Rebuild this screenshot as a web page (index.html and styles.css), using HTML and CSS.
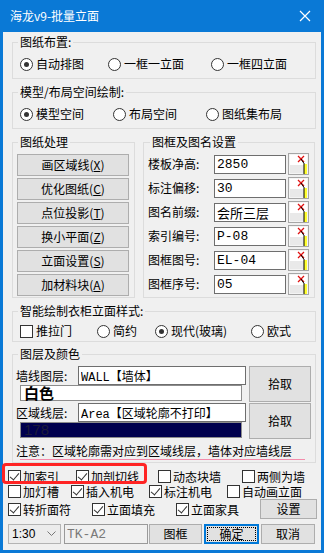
FILE: index.html
```html
<!DOCTYPE html>
<html lang="zh">
  <head>
    <meta charset="UTF-8" />
    <meta name="viewport" content="width=device-width, initial-scale=1.0" />
    <title>海龙v9-批量立面</title>
    <link rel="stylesheet" href="styles.css">
  </head>
  <body>
    <div class="window">
      <div class="titlebar">
        <span class="title">海龙v9-批量立面</span>
        <svg class="close" width="12" height="12" viewBox="0 0 12 12">
          <path d="M1 1 L11 11 M11 1 L1 11" stroke="#fff" stroke-width="1.2" fill="none" />
        </svg>
      </div>

      <div class="content">
        <fieldset class="group g-wide">
          <legend>图纸布置:</legend>
          <div class="opts cols-layout">
            <label class="opt"><span class="radio on"></span>自动排图</label>
            <label class="opt"><span class="radio"></span>一框一立面</label>
            <label class="opt"><span class="radio"></span>一框四立面</label>
          </div>
        </fieldset>

        <fieldset class="group g-wide">
          <legend>模型/布局空间绘制:</legend>
          <div class="opts cols-space">
            <label class="opt"><span class="radio on"></span>模型空间</label>
            <label class="opt"><span class="radio"></span>布局空间</label>
            <label class="opt"><span class="radio"></span>图纸集布局</label>
          </div>
        </fieldset>

        <div class="split">
          <fieldset class="group g-tools">
            <legend>图纸处理</legend>
            <div class="tools">
              <button class="btn">画区域线(<u>X</u>)</button>
              <button class="btn">优化图纸(<u>C</u>)</button>
              <button class="btn">点位投影(<u>T</u>)</button>
              <button class="btn">换小平面(<u>Z</u>)</button>
              <button class="btn">立面设置(<u>S</u>)</button>
              <button class="btn">加材料块(<u>A</u>)</button>
            </div>
          </fieldset>

          <fieldset class="group g-frame">
            <legend>图框及图名设置</legend>
            <div class="fields">
              <div class="field"><span class="flabel">楼板净高:</span><input class="txt" value="2850"><button class="pick"></button></div>
              <div class="field"><span class="flabel">标注偏移:</span><input class="txt" value="30"><button class="pick"></button></div>
              <div class="field"><span class="flabel">图名前缀:</span><input class="txt" value="会所三层"><button class="pick"></button></div>
              <div class="field"><span class="flabel">索引编号:</span><input class="txt" value="P-08"><button class="pick"></button></div>
              <div class="field"><span class="flabel">图框图号:</span><input class="txt" value="EL-04"><button class="pick"></button></div>
              <div class="field"><span class="flabel">图框序号:</span><input class="txt" value="05"><button class="pick"></button></div>
            </div>
          </fieldset>
        </div>

        <fieldset class="group g-wide g-style">
          <legend>智能绘制衣柜立面样式:</legend>
          <div class="opts cols-style">
            <label class="opt"><span class="chk"></span>推拉门</label>
            <label class="opt"><span class="radio"></span>简约</label>
            <label class="opt"><span class="radio on"></span>现代(玻璃)</label>
            <label class="opt"><span class="radio"></span>欧式</label>
          </div>
        </fieldset>

        <fieldset class="group g-wide g-layers">
          <legend>图层及颜色</legend>
          <div class="layer-row">
            <div class="layer-left">
              <div class="layer-top">
                <span class="llabel">墙线图层:</span>
                <input class="ltxt" value="WALL【墙体】">
              </div>
              <div class="swatch swatch-white">白色</div>
            </div>
            <button class="btn btn-pick">拾取</button>
          </div>
          <div class="layer-row">
            <div class="layer-left">
              <div class="layer-top">
                <span class="llabel">区域线层:</span>
                <input class="ltxt" value="Area【区域轮廓不打印】">
              </div>
              <div class="swatch swatch-navy">178</div>
            </div>
            <button class="btn btn-pick">拾取</button>
          </div>
          <div class="note">注意：区域轮廓需对应到区域线层，墙体对应墙线层</div>
          <div class="note-rule"></div>
        </fieldset>

        <div class="checks">
          <div class="crow cols-c1">
            <label class="opt"><span class="chk on"></span>加索引</label>
            <label class="opt"><span class="chk on"></span>加剖切线</label>
            <label class="opt"><span class="chk"></span>动态块墙</label>
            <label class="opt"><span class="chk"></span>两侧为墙</label>
          </div>
          <div class="crow cols-c2">
            <label class="opt"><span class="chk"></span>加灯槽</label>
            <label class="opt"><span class="chk on"></span>插入机电</label>
            <label class="opt"><span class="chk on"></span>标注机电</label>
            <label class="opt"><span class="chk"></span>自动画立面</label>
          </div>
          <div class="crow cols-c3">
            <label class="opt"><span class="chk on"></span>转折面符</label>
            <label class="opt"><span class="chk on"></span>立面填充</label>
            <label class="opt"><span class="chk on"></span>立面家具</label>
            <button class="btn btn-set">设置</button>
          </div>
          <div class="mark"></div>
        </div>

        <div class="footer">
          <div class="combo">
            <span>1:30</span>
            <svg width="9" height="6" viewBox="0 0 9 6"><path d="M0.5 0.5 L4.5 4.5 L8.5 0.5" stroke="#777" fill="none" /></svg>
          </div>
          <input class="tk" value="TK-A2" readonly>
          <button class="btn btn-foot btn-frame">图框</button>
          <button class="btn btn-foot btn-ok"><span class="focus">确定</span></button>
          <button class="btn btn-foot btn-cancel">取消</button>
        </div>
      </div>
    </div>
  </body>
</html>
```

FILE: styles.css
```css
* {
  box-sizing: border-box;
  margin: 0;
  padding: 0;
}

body {
  font-family: "Noto Sans CJK SC", "Noto Sans", sans-serif;
  font-size: 12px;
  line-height: 16px;
  color: #000;
  background-color: #fff;
}

.window {
  width: 324px;
  height: 553px;
  border: 3px solid #0a79d6;
  border-top: none;
  background-color: #f0f0f0;
}

/* Title bar */
.titlebar {
  height: 32px;
  margin: 0 -3px;
  padding: 0 13px 0 10px;
  background-color: #0a79d6;
  color: #fff;
  display: flex;
  align-items: center;
  justify-content: space-between;
}

.title {
  font-size: 12px;
  line-height: 16px;
}

.content {
  padding-top: 2px;
}

/* Group boxes */
.group {
  border: 1px solid #dcdcdc;
  min-width: 0;
  padding: 0 4px 6px 7px;
}

.group legend {
  padding: 0 2px;
  margin-left: -2px;
  line-height: 16px;
}

.g-wide {
  margin: 0 5px 5px 9px;
}

.g-style {
  padding-bottom: 2px;
  margin-bottom: 4px;
}

.opts {
  display: grid;
  margin-top: 6px;
  align-items: center;
}

.g-style .opts {
  margin-top: 4px;
}

.cols-layout {
  grid-template-columns: 88px 103px auto;
}

.cols-space {
  grid-template-columns: 93px 93px auto;
}

.cols-style {
  grid-template-columns: 77px 58px 96px auto;
}

.opt {
  display: flex;
  align-items: center;
  gap: 3px;
  white-space: nowrap;
  height: 16px;
}

.radio {
  position: relative;
  display: inline-block;
  width: 13px;
  height: 13px;
  border: 1px solid #333;
  border-radius: 50%;
  background-color: #fff;
  flex: none;
}

.radio.on::after {
  content: "";
  position: absolute;
  left: 3px;
  top: 3px;
  width: 5px;
  height: 5px;
  border-radius: 50%;
  background-color: #333;
}

.chk {
  position: relative;
  display: inline-block;
  width: 13px;
  height: 13px;
  border: 1px solid #333;
  background-color: #fff;
  flex: none;
}

.chk.on::after {
  content: "";
  position: absolute;
  left: 3px;
  top: 0px;
  width: 4px;
  height: 8px;
  border-right: 1.5px solid #333;
  border-bottom: 1.5px solid #333;
  transform: rotate(40deg);
}

/* Buttons */
.btn {
  font-family: "Noto Sans CJK SC", sans-serif;
  font-size: 12px;
  line-height: 16px;
  color: #000;
  background-color: #e1e1e1;
  border: 1px solid #adadad;
  cursor: pointer;
}

.btn u {
  text-underline-offset: 1px;
}

/* Drawing tools and frame settings */
.split {
  display: flex;
  margin: 0 6px 5px 9px;
  gap: 8px;
}

.g-tools {
  width: 123px;
  padding: 0 5px 1px 4px;
}

.g-tools legend {
  margin-left: 1px;
}

.tools {
  display: flex;
  flex-direction: column;
  gap: 2px;
  margin-top: 4px;
}

.tools .btn {
  height: 22px;
  width: 112px;
}

.g-frame {
  flex: 1;
  padding: 0 4px 1px 4px;
}

.g-frame legend {
  margin-left: 2px;
}

.fields {
  display: flex;
  flex-direction: column;
  gap: 2px;
  margin-top: 3px;
}

.field {
  display: flex;
  align-items: center;
  height: 22px;
}

.flabel {
  width: 66px;
  flex: none;
}

.txt {
  width: 72px;
  height: 19px;
  border: 1px solid #6e6e6e;
  padding: 0 2px;
  background-color: #fff;
  font-family: "Liberation Mono", "Noto Sans CJK SC", monospace;
  font-size: 13px;
  color: #000;
  outline: none;
}

.pick {
  width: 21px;
  height: 22px;
  margin-left: 2px;
  border: 1px solid #a6a6a6;
  background-color: #f4f4f4;
  background-image:
    url("data:image/svg+xml;utf8,<svg xmlns='http://www.w3.org/2000/svg' width='19' height='20' viewBox='0 0 19 20'><rect x='1' y='1' width='17' height='10' fill='%23ffffff'/><rect x='1' y='11' width='17' height='8' fill='%23e9e9e9'/><path d='M9 2 L15 8 M15 2 L9 8' stroke='%23e01010' stroke-width='1.3'/><path d='M12 5 L16 11' stroke='%23000' stroke-width='1'/><rect x='15' y='10' width='3' height='10' fill='%23ffff30'/><path d='M15 10 L15 20' stroke='%23000' stroke-width='1'/></svg>");
  background-repeat: no-repeat;
  background-position: center;
}

/* Layers */
.g-layers {
  padding: 0 4px 2px 3px;
  margin-bottom: 6px;
}

.g-layers legend {
  margin-left: 2px;
}

.layer-row {
  display: flex;
  margin-top: 4px;
}

.layer-row + .layer-row {
  margin-top: 1px;
}

.layer-left {
  width: 232px;
}

.layer-top {
  display: flex;
  align-items: center;
}

.llabel {
  width: 62px;
  flex: none;
}

.ltxt {
  width: 168px;
  height: 19px;
  border: 1px solid #6e6e6e;
  padding: 0 2px;
  background-color: #fff;
  font-family: "Liberation Mono", "Noto Sans CJK SC", monospace;
  font-size: 12px;
  color: #000;
  outline: none;
}

.swatch {
  width: 222px;
  height: 16px;
  margin-left: 4px;
  border: 1px solid #8c8c8c;
  padding-left: 3px;
  line-height: 14px;
}

.swatch-white {
  background-color: #fff;
  font-size: 15px;
  font-weight: bold;
}

.swatch-navy {
  background-color: #00004e;
  color: #1b1b38;
  font-family: "Liberation Sans", sans-serif;
  font-size: 15px;
}

.btn-pick {
  width: 62px;
  height: 36px;
  margin-left: 2px;
}

.note {
  margin-top: 4px;
  line-height: 16px;
  white-space: nowrap;
}

.note-rule {
  margin-left: 4px;
  width: 285px;
  height: 1px;
  background-color: #f38cab;
}

/* Checkbox rows */
.checks {
  position: relative;
  padding-left: 5px;
}

.crow {
  display: grid;
  height: 15px;
  align-items: center;
}

.cols-c1 {
  grid-template-columns: 68px 82px 84px auto;
}

.cols-c2 {
  grid-template-columns: 63px 78px 78px auto;
}

.cols-c3 {
  grid-template-columns: 84px 84px 84px auto;
}

.crow .opt {
  gap: 2px;
  height: 15px;
  line-height: 15px;
}

.btn-set {
  width: 57px;
  height: 20px;
}

.mark {
  position: absolute;
  left: -1px;
  top: -6px;
  width: 145px;
  height: 21px;
  border: 3px solid #ff2424;
  border-radius: 4px;
}

/* Footer */
.footer {
  display: flex;
  margin-top: 10px;
  padding-left: 5px;
  height: 20px;
}

.combo {
  width: 53px;
  height: 20px;
  margin-right: 3px;
  border: 1px solid #b4b4b4;
  background-color: #ececec;
  display: flex;
  align-items: center;
  justify-content: space-between;
  padding: 0 4px 0 3px;
  font-family: "Liberation Sans", sans-serif;
  font-size: 12px;
}

.tk {
  width: 84px;
  height: 20px;
  margin-right: 1px;
  border: 1px solid #9a9a9a;
  background-color: #f0f0f0;
  padding: 0 2px;
  font-family: "Liberation Mono", monospace;
  font-size: 13px;
  color: #7a7a7a;
  outline: none;
}

.btn-foot {
  height: 20px;
}

.btn-frame {
  width: 53px;
  margin-right: 2px;
}

.btn-ok {
  width: 55px;
  margin-right: 2px;
  border: 2px solid #0078d7;
  padding: 1px;
  display: flex;
}

.btn-ok .focus {
  flex: 1;
  border: 1px dotted #000;
  line-height: 12px;
}

.btn-cancel {
  width: 54px;
}
```
